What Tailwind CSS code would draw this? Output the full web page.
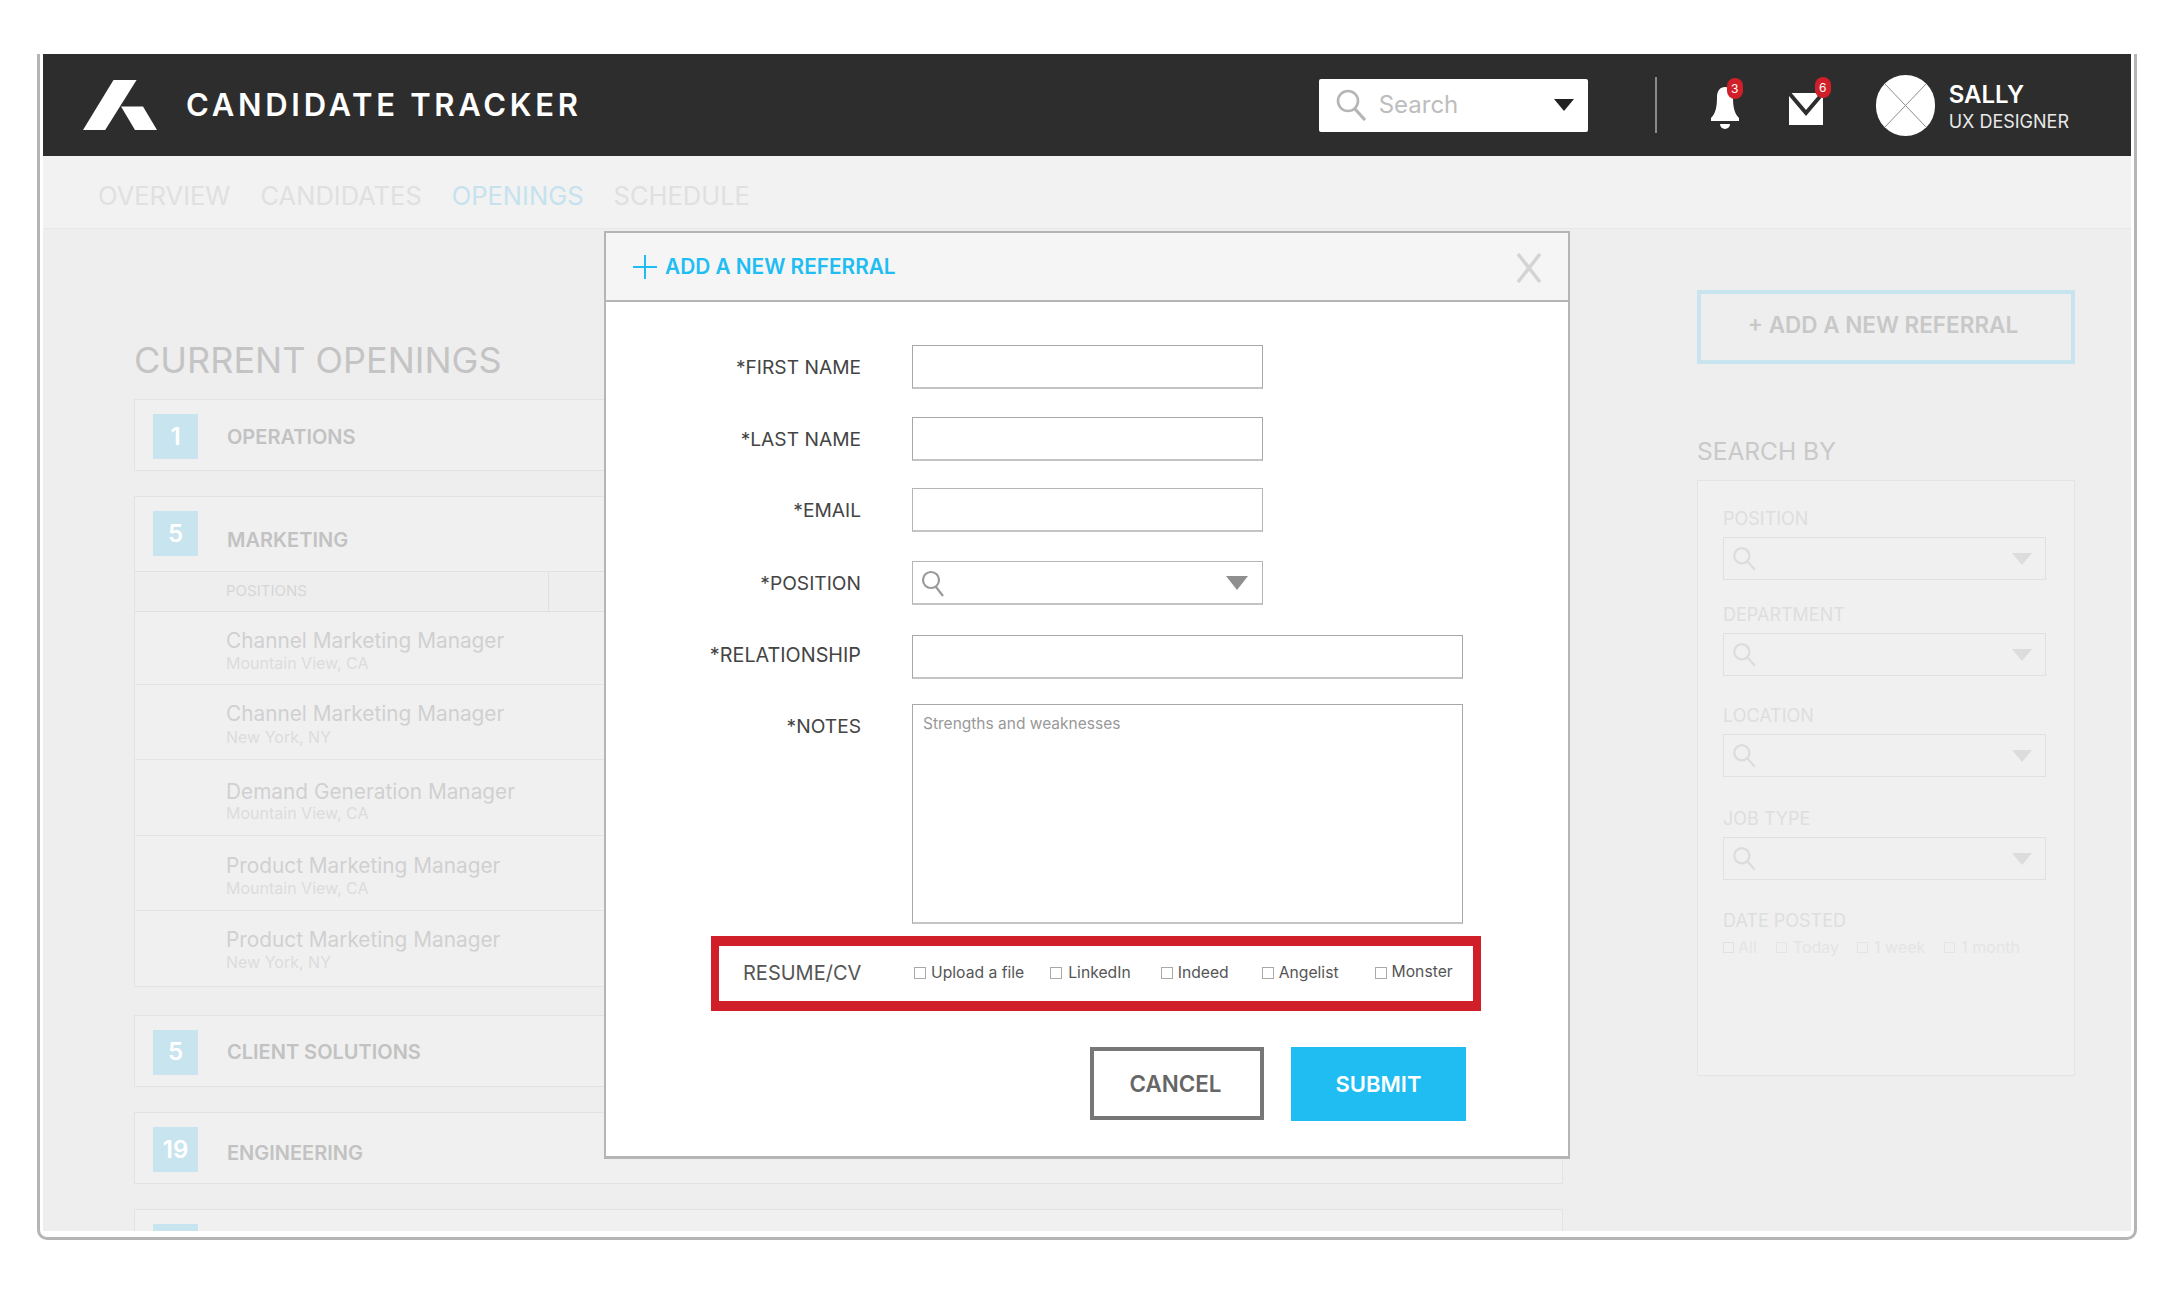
<!DOCTYPE html>
<html lang="en">
<head>
    <meta charset="UTF-8">
    <title>Candidate Tracker</title>
    <script src="https://cdn.jsdelivr.net/npm/@tailwindcss/browser@4"></script>
</head>
<body class="bg-white font-['Inter',sans-serif] h-screen overflow-hidden">
    <div class="relative ml-[37px] mt-[54px] w-[2100px] h-[1186px] border-x-[3px] border-b-[3px] border-[#b5b5b5] rounded-b-[10px] px-[3px] pb-[6px]">
        <div class="h-full flex flex-col overflow-hidden bg-[#eeeeee]">

            <!-- top bar -->
            <header class="h-[102px] shrink-0 bg-[#2d2d2d] flex items-center pl-[40px] pr-[62px] text-white">
                <svg class="w-[74px] h-[50px] shrink-0 -mt-[1px]" viewBox="0 0 74 50" fill="#fff"><polygon points="30.5,0 53.6,0 22.2,50 0,50"/><polygon points="38,26.6 60,26.6 74,50 52,50"/></svg>
                <div class="ml-[29px] -mt-[2px] text-[31px] leading-none font-semibold tracking-[3.7px] whitespace-nowrap">CANDIDATE TRACKER</div>
                <div class="ml-auto w-[269px] h-[53px] bg-white rounded-[2px] flex items-center pl-[16px] pr-[14px]">
                    <svg class="w-[32px] h-[32px]" viewBox="0 0 32 32" fill="none" stroke="#b5b5b5" stroke-width="2.6"><circle cx="13" cy="12" r="10"/><path d="M20 20l10 11" stroke-width="3.2"/></svg>
                    <span class="ml-[12px] text-[24px] text-[#bdbdbd] -mt-[1px]">Search</span>
                    <svg class="ml-auto w-[20px] h-[12px]" viewBox="0 0 20 12" fill="#222"><polygon points="0,0 20,0 10,12"/></svg>
                </div>
                <div class="ml-[67px] w-[2px] h-[56px] bg-[#8a8a8a]"></div>
                <div class="relative ml-[52px] w-[32px] h-[52px]">
                    <svg class="w-[32px] h-[52px]" viewBox="0 0 32 52" fill="#fff"><path d="M16 8c-5 0-8 4-8 10 0 9-1 16-6 21v3h28v-3c-5-5-6-12-6-21 0-6-3-10-8-10z"/><path d="M11 45h10a5 5 0 0 1-10 0z"/></svg>
                    <span class="absolute -top-[1px] left-[18px] w-[16px] h-[21px] rounded-full bg-[#d11f2a] text-[12px] leading-[21px] text-center text-white">3</span>
                </div>
                <div class="relative ml-[48px] w-[36px] h-[46px] mt-[6px]">
                    <svg class="w-[34px] h-[46px]" viewBox="0 0 34 46" fill="#fff"><rect y="8" width="34" height="32"/><path d="M0 8l17 20L34 8" fill="none" stroke="#2d2d2d" stroke-width="4"/></svg>
                    <span class="absolute -top-[8px] left-[26px] w-[16px] h-[21px] rounded-full bg-[#d11f2a] text-[12px] leading-[21px] text-center text-white">6</span>
                </div>
                <div class="ml-[51px] w-[59px] h-[61px] rounded-full bg-white shrink-0 overflow-hidden">
                    <svg class="w-full h-full" viewBox="0 0 60 62" stroke="#8a8a8a" stroke-width="1"><path d="M9 9l42 44M51 9L9 53"/></svg>
                </div>
                <div class="ml-[14px] mt-[4px] leading-none whitespace-nowrap">
                    <div class="text-[24px] font-semibold">SALLY</div>
                    <div class="mt-[6px] text-[18px] text-[#e8e8e8]">UX DESIGNER</div>
                </div>
            </header>

            <!-- tabs -->
            <nav class="h-[73px] shrink-0 bg-[#f2f2f2] border-b border-[#e8e8e8] flex items-center gap-[30px] pl-[55px] pt-[8px] text-[25.5px] text-[#e0e0e0]">
                <span>OVERVIEW</span>
                <span>CANDIDATES</span>
                <span class="text-[#c5e2ee]">OPENINGS</span>
                <span>SCHEDULE</span>
            </nav>

            <div class="flex pl-[91px]">
                <!-- openings -->
                <div class="w-[1429px] shrink-0">
                    <h2 class="mt-[111px] h-[59px] text-[36px] leading-[40px] text-[#c4c4c4]">CURRENT OPENINGS</h2>
                    <div class="h-[72px] bg-[#f0f0f0] border border-[#e3e3e3] flex items-center pl-[18px] pt-[3px]">
                        <span class="w-[45px] h-[45px] bg-[#c8e4ef] text-white text-[24px] font-semibold flex items-center justify-center">1</span>
                        <span class="ml-[29px] text-[20px] font-semibold text-[#c2c2c2]">OPERATIONS</span>
                    </div>
                    <div class="mt-[25px] h-[491px] bg-[#f0f0f0] border border-[#e3e3e3]">
                        <div class="h-[74px] flex items-start pl-[18px] pt-[14px]">
                            <span class="w-[45px] h-[45px] bg-[#c8e4ef] text-white text-[24px] font-semibold flex items-center justify-center">5</span>
                            <span class="ml-[29px] mt-[14px] text-[20px] font-semibold text-[#c2c2c2]">MARKETING</span>
                        </div>
                        <div class="h-[41px] bg-[#eeeeee] border-y border-[#e0e0e0] flex items-center text-[15px] text-[#d6d6d6]">
                            <span class="w-[414px] h-full pl-[91px] border-r border-[#e0e0e0] flex items-center">POSITIONS</span>
                        </div>
                        <div class="h-[73px] border-b border-[#e4e4e4] pl-[91px] pt-[16px]">
                            <div class="text-[20.8px] leading-[26px] text-[#d0d0d0]">Channel Marketing Manager</div>
                            <div class="text-[16px] leading-[18px] text-[#dcdcdc]">Mountain View, CA</div>
                        </div>
                        <div class="h-[75px] border-b border-[#e4e4e4] pl-[91px] pt-[16px]">
                            <div class="text-[20.8px] leading-[26px] text-[#d0d0d0]">Channel Marketing Manager</div>
                            <div class="text-[16px] leading-[20px] text-[#dcdcdc]">New York, NY</div>
                        </div>
                        <div class="h-[76px] border-b border-[#e4e4e4] pl-[91px] pt-[19px]">
                            <div class="text-[20.8px] leading-[26px] text-[#d0d0d0]">Demand Generation Manager</div>
                            <div class="text-[16px] leading-[16px] text-[#dcdcdc]">Mountain View, CA</div>
                        </div>
                        <div class="h-[75px] border-b border-[#e4e4e4] pl-[91px] pt-[17px]">
                            <div class="text-[20.8px] leading-[26px] text-[#d0d0d0]">Product Marketing Manager</div>
                            <div class="text-[16px] leading-[18px] text-[#dcdcdc]">Mountain View, CA</div>
                        </div>
                        <div class="pl-[91px] pt-[16px]">
                            <div class="text-[20.8px] leading-[26px] text-[#d0d0d0]">Product Marketing Manager</div>
                            <div class="text-[16px] leading-[18px] text-[#dcdcdc]">New York, NY</div>
                        </div>
                    </div>
                    <div class="mt-[28px] h-[72px] bg-[#f0f0f0] border border-[#e3e3e3] flex items-center pl-[18px] pt-[2px]">
                        <span class="w-[45px] h-[45px] bg-[#c8e4ef] text-white text-[24px] font-semibold flex items-center justify-center">5</span>
                        <span class="ml-[29px] text-[20px] font-semibold text-[#c2c2c2]">CLIENT SOLUTIONS</span>
                    </div>
                    <div class="mt-[25px] h-[72px] bg-[#f0f0f0] border border-[#e3e3e3] flex items-start pl-[18px] pt-[14px]">
                        <span class="w-[45px] h-[45px] bg-[#c8e4ef] text-white text-[24px] font-semibold flex items-center justify-center">19</span>
                        <span class="ml-[29px] mt-[11px] text-[20px] font-semibold text-[#c2c2c2]">ENGINEERING</span>
                    </div>
                    <div class="mt-[25px] h-[72px] bg-[#f0f0f0] border border-[#e3e3e3] pl-[18px] pt-[14px]">
                        <span class="block w-[45px] h-[45px] bg-[#c8e4ef]"></span>
                    </div>
                </div>

                <!-- search panel -->
                <aside class="ml-[134px] w-[378px] shrink-0">
                    <div class="mt-[61px] h-[74px] border-[4px] border-[#c8e4ef] flex items-center justify-center pb-[5px] pr-[6px] text-[22.5px] font-semibold text-[#c8c8c8]">+ ADD A NEW REFERRAL</div>
                    <h3 class="mt-[74px] -translate-y-[1px] text-[24.5px] leading-[28px] text-[#c9c9c9] h-[42px]">SEARCH BY</h3>
                    <div class="h-[596px] bg-[#f0f0f0] border border-[#e4e4e4] pl-[25px] pr-[28px] pt-[28px]">
                        <div class="text-[18px] leading-[20px] text-[#dedede]">POSITION</div>
                        <div class="mt-[8px] h-[43px] border border-[#e0e0e0] flex items-center pl-[7px] pr-[13px]">
                            <svg class="w-[26px] h-[26px]" viewBox="0 0 24 24" fill="none" stroke="#dcdcdc" stroke-width="2"><circle cx="10" cy="9" r="7"/><path d="M15 14l7 8"/></svg>
                            <svg class="ml-auto w-[20px] h-[12px]" viewBox="0 0 20 12" fill="#dcdcdc"><polygon points="0,0 20,0 10,12"/></svg>
                        </div>
                        <div class="mt-[25px] text-[18px] leading-[20px] text-[#dedede]">DEPARTMENT</div>
                        <div class="mt-[8px] h-[43px] border border-[#e0e0e0] flex items-center pl-[7px] pr-[13px]">
                            <svg class="w-[26px] h-[26px]" viewBox="0 0 24 24" fill="none" stroke="#dcdcdc" stroke-width="2"><circle cx="10" cy="9" r="7"/><path d="M15 14l7 8"/></svg>
                            <svg class="ml-auto w-[20px] h-[12px]" viewBox="0 0 20 12" fill="#dcdcdc"><polygon points="0,0 20,0 10,12"/></svg>
                        </div>
                        <div class="mt-[30px] text-[18px] leading-[20px] text-[#dedede]">LOCATION</div>
                        <div class="mt-[8px] h-[43px] border border-[#e0e0e0] flex items-center pl-[7px] pr-[13px]">
                            <svg class="w-[26px] h-[26px]" viewBox="0 0 24 24" fill="none" stroke="#dcdcdc" stroke-width="2"><circle cx="10" cy="9" r="7"/><path d="M15 14l7 8"/></svg>
                            <svg class="ml-auto w-[20px] h-[12px]" viewBox="0 0 20 12" fill="#dcdcdc"><polygon points="0,0 20,0 10,12"/></svg>
                        </div>
                        <div class="mt-[32px] text-[18px] leading-[20px] text-[#dedede]">JOB TYPE</div>
                        <div class="mt-[8px] h-[43px] border border-[#e0e0e0] flex items-center pl-[7px] pr-[13px]">
                            <svg class="w-[26px] h-[26px]" viewBox="0 0 24 24" fill="none" stroke="#dcdcdc" stroke-width="2"><circle cx="10" cy="9" r="7"/><path d="M15 14l7 8"/></svg>
                            <svg class="ml-auto w-[20px] h-[12px]" viewBox="0 0 20 12" fill="#dcdcdc"><polygon points="0,0 20,0 10,12"/></svg>
                        </div>
                        <div class="mt-[31px] text-[18px] leading-[20px] text-[#dedede]">DATE POSTED</div>
                        <div class="mt-[6px] flex items-center text-[16px] leading-[20px] text-[#e4e4e4] whitespace-nowrap">
                            <span class="w-[11px] h-[11px] border border-[#e0e0e0]"></span><span class="ml-[4px]">All</span>
                            <span class="ml-[19px] w-[11px] h-[11px] border border-[#e4e4e4]"></span><span class="ml-[6px]">Today</span>
                            <span class="ml-[18px] w-[11px] h-[11px] border border-[#e4e4e4]"></span><span class="ml-[6px]">1 week</span>
                            <span class="ml-[19px] w-[11px] h-[11px] border border-[#e4e4e4]"></span><span class="ml-[6px]">1 month</span>
                        </div>
                    </div>
                </aside>
            </div>
        </div>

        <!-- referral modal -->
        <div class="absolute left-[564px] top-[177px] w-[966px] h-[928px] bg-white border-2 border-[#b5b5b5] border-b-[3px]">
            <div class="h-[69px] bg-[#f5f5f5] border-b-2 border-[#b5b5b5] flex items-center pl-[27px] pr-[25px]">
                <svg class="w-[24px] h-[24px]" viewBox="0 0 24 24" stroke="#1fbdf2" stroke-width="2"><path d="M12 0v24M0 12h24"/></svg>
                <span class="ml-[8px] text-[20.8px] font-semibold text-[#1fbdf2]">ADD A NEW REFERRAL</span>
                <svg class="ml-auto w-[28px] h-[30px] mt-[3px]" viewBox="0 0 28 30" stroke="#d4d4d4" stroke-width="3.5"><path d="M3 1l22 28M25 1L3 29"/></svg>
            </div>
            <form class="pt-[43px] flex flex-col">
                <div class="flex items-center h-[44px]">
                    <label class="w-[255px] text-right text-[19.2px] pt-[1px] text-[#444]">*FIRST NAME</label>
                    <div class="ml-[51px] w-[351px] h-full border border-[#a8a8a8] border-b-2 border-b-[#c4c4c4]"></div>
                </div>
                <div class="mt-[28px] flex items-center h-[44px]">
                    <label class="w-[255px] text-right text-[19.2px] pt-[1px] text-[#444]">*LAST NAME</label>
                    <div class="ml-[51px] w-[351px] h-full border border-[#a8a8a8] border-b-2 border-b-[#c4c4c4]"></div>
                </div>
                <div class="mt-[27px] flex items-center h-[44px]">
                    <label class="w-[255px] text-right text-[19.2px] pt-[1px] text-[#444]">*EMAIL</label>
                    <div class="ml-[51px] w-[351px] h-full border border-[#b5b5b5] border-b-2 border-b-[#c4c4c4]"></div>
                </div>
                <div class="mt-[29px] flex items-center h-[44px]">
                    <label class="w-[255px] text-right text-[19.2px] pt-[1px] text-[#444]">*POSITION</label>
                    <div class="ml-[51px] w-[351px] h-full border border-[#b5b5b5] border-b-2 border-b-[#c4c4c4] flex items-center pl-[8px] pr-[14px]">
                        <svg class="w-[24px] h-[28px]" viewBox="0 0 24 28" fill="none" stroke="#9a9a9a" stroke-width="2.2"><circle cx="10" cy="11" r="8"/><path d="M15 18l7 9"/></svg>
                        <svg class="ml-auto w-[22px] h-[14px]" viewBox="0 0 22 14" fill="#8f8f8f"><polygon points="0,0 22,0 11,14"/></svg>
                    </div>
                </div>
                <div class="mt-[30px] flex items-center h-[44px]">
                    <label class="w-[255px] text-right text-[19.8px] -mt-[2px] text-[#444]">*RELATIONSHIP</label>
                    <div class="ml-[51px] w-[551px] h-full border border-[#a8a8a8] border-b-2 border-b-[#c4c4c4]"></div>
                </div>
                <div class="mt-[25px] flex items-start">
                    <label class="w-[255px] text-right text-[19.2px] leading-[28px] mt-[8px] text-[#444]">*NOTES</label>
                    <div class="ml-[51px] w-[551px] h-[220px] border border-[#a8a8a8] border-b-2 border-b-[#c4c4c4] pl-[10px] pt-[9px] text-[15.5px] leading-[20px] text-[#999]">Strengths and weaknesses</div>
                </div>
                <div class="mt-[12px] ml-[105px] w-[770px] h-[75px] border-x-[8px] border-y-[10px] border-[#d01f28] flex items-center">
                    <span class="ml-[24px] w-[171px] -mt-[1px] text-[20px] text-[#555] shrink-0">RESUME/CV</span>
                    <div class="flex items-center -mt-[1px] text-[15.7px] text-[#555] whitespace-nowrap">
                        <span class="w-[12px] h-[12px] border border-[#aaa]"></span><span class="ml-[5px]">Upload a file</span>
                        <span class="ml-[26px] w-[12px] h-[12px] border border-[#aaa]"></span><span class="ml-[6px]">LinkedIn</span>
                        <span class="ml-[30px] w-[12px] h-[12px] border border-[#aaa]"></span><span class="ml-[5px]">Indeed</span>
                        <span class="ml-[33px] w-[12px] h-[12px] border border-[#aaa]"></span><span class="ml-[5px]">Angelist</span>
                        <span class="ml-[36px] w-[12px] h-[12px] border border-[#aaa]"></span><span class="ml-[5px] -mt-[2px]">Monster</span>
                    </div>
                </div>
                <div class="mt-[36px] ml-[484px] flex items-start">
                    <div class="w-[174px] h-[73px] border-[4px] border-[#777] flex items-center justify-center pr-[3px] text-[22.4px] font-semibold text-[#666]">CANCEL</div>
                    <div class="ml-[27px] w-[175px] h-[74px] bg-[#1fbdf2] flex items-center justify-center text-[22px] font-semibold text-white">SUBMIT</div>
                </div>
            </form>
        </div>
    </div>
</body>
</html>
